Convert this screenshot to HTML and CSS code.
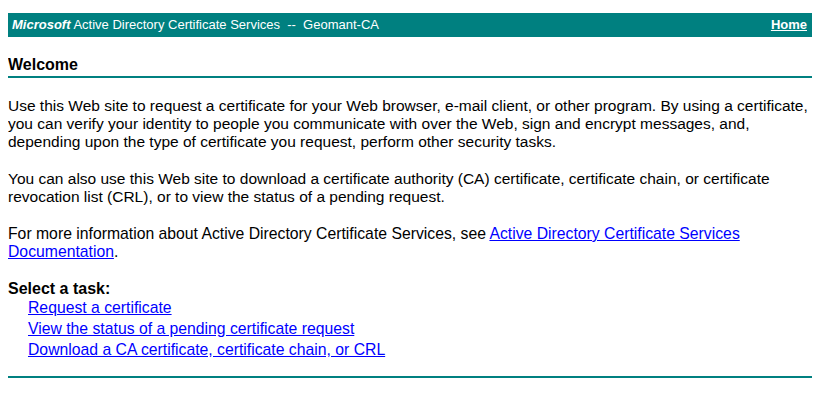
FILE: index.html
```html
<!doctype html>
<html>
<head>
    <meta charset="utf-8">
    <link rel="stylesheet" href="styles.css">
</head>
<body>
    <div class="topbar">
        <span class="title"><i class="ms">Microsoft</i> Active Directory Certificate Services &nbsp;--&nbsp; Geomant-CA</span>
        <a class="home" href="#">Home</a>
    </div>

    <div class="welcome">Welcome</div>

    <p>Use this Web site to request a certificate for your Web browser, e-mail client, or other program. By using a certificate, you can verify your identity to people you communicate with over the Web, sign and encrypt messages, and, depending upon the type of certificate you request, perform other security tasks.</p>

    <p>You can also use this Web site to download a certificate authority (CA) certificate, certificate chain, or certificate revocation list (CRL), or to view the status of a pending request.</p>

    <p class="more">For more information about Active Directory Certificate Services, see <a href="#">Active Directory Certificate Services Documentation</a>.</p>

    <div class="task">Select a task:</div>
    <ul class="tasks">
        <li><a href="#">Request a certificate</a></li>
        <li><a href="#">View the status of a pending certificate request</a></li>
        <li><a href="#">Download a CA certificate, certificate chain, or CRL</a></li>
    </ul>

    <div class="bottom"></div>
</body>
</html>
```

FILE: styles.css
```css
body{
    margin: 8px 5px 8px 8px;
    font-family: "Liberation Sans", Arial, sans-serif;
    font-size: 15.5px;
    line-height: 18px;
    color: #000;
    background: #fff;
}
a{
    color: #0000ff;
}
.topbar{
    margin-top: 5px;
    height: 24px;
    background-color: #008080;
    color: #fff;
    font-size: 13px;
    line-height: 24px;
    display: flex;
    justify-content: space-between;
    padding: 0 5px 0 4px;
}
.topbar .ms{
    font-weight: bold;
}
.topbar .home{
    color: #fff;
    font-weight: bold;
}
.welcome{
    margin-top: 19px;
    font-size: 16px;
    font-weight: bold;
    padding-bottom: 2px;
    border-bottom: 2px solid #008080;
}
p{
    margin: 19px 0 0 0;
}
p.more{
    font-size: 15.75px;
}
.task{
    margin-top: 19px;
    font-size: 16px;
    line-height: 17px;
    font-weight: bold;
}
.tasks{
    list-style: none;
    margin: 0;
    padding: 0 0 0 20px;
    font-size: 15.75px;
}
.tasks li{
    line-height: 21px;
}
.bottom{
    margin-top: 16px;
    border-top: 2px solid #008080;
}
```
